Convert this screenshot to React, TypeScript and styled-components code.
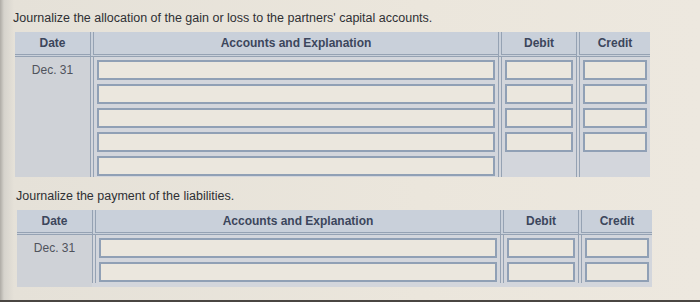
import React from 'react'
import styled, { createGlobalStyle } from 'styled-components'

const GlobalStyle = createGlobalStyle`
    body {
        margin: 0;
        background: #e9e5dc;
        font-family: "Liberation Sans", Arial, sans-serif;
    }
`

const Screen = styled.div`
    width: 700px;
    height: 302px;
    box-sizing: border-box;
    padding: 11px 0 0 13px;
    background: linear-gradient(90deg, #aeaba5 0, #d6d3cc 4px, #e5e1d8 14px, #ebe6dc 60%, #ede8df 100%);
    border-bottom: 2px solid #4a4642;
    overflow: hidden;
`

const Title = styled.p<{ $indent?: number; $top?: number }>`
    margin: ${p => p.$top ?? 0}px 0 0 ${p => p.$indent ?? 0}px;
    font-size: 12.5px;
    line-height: 15px;
    color: #2f3034;
`

const Table = styled.div<{ $indent: number; $top: number; $bottom: number }>`
    display: grid;
    grid-template-columns: 75px 408px 78px 74px;
    width: 635px;
    margin: ${p => p.$top}px 0 0 ${p => p.$indent}px;
    padding-bottom: ${p => p.$bottom}px;
    background: linear-gradient(90deg, #cfd2d7 75px, #d3d6dc 75px);
`

const HeadCell = styled.div<{ $first?: boolean }>`
    height: 25px;
    box-sizing: border-box;
    background: #c9d0da;
    border-bottom: 3px double #95a2b3;
    border-left: ${p => (p.$first ? 'none' : '4px double #95a2b3')};
    font-size: 12px;
    font-weight: bold;
    line-height: 22px;
    text-align: center;
    color: #3c465c;
`

const Cell = styled.div<{ $first?: boolean }>`
    height: 24px;
    box-sizing: border-box;
    padding: 3px 3px 1px;
    border-left: ${p => (p.$first ? 'none' : '4px double #95a2b3')};
`

const DateText = styled.div`
    font-size: 12px;
    line-height: 20px;
    text-align: center;
    color: #4f535c;
`

const Field = styled.input`
    display: block;
    width: 100%;
    height: 20px;
    box-sizing: border-box;
    margin: 0;
    padding: 0 4px;
    background: #ebe7de;
    border: 2px solid #90a0b5;
    border-radius: 0;
    outline: none;
`

type JournalProps = {
    rows: number
    amountRows: number
    indent: number
    top: number
    bottom: number
}

const Journal = ({ rows, amountRows, indent, top, bottom }: JournalProps) => (
    <Table $indent={indent} $top={top} $bottom={bottom}>
        <HeadCell $first>Date</HeadCell>
        <HeadCell>Accounts and Explanation</HeadCell>
        <HeadCell>Debit</HeadCell>
        <HeadCell>Credit</HeadCell>
        {Array.from({ length: rows }).map((_, i) => (
            <React.Fragment key={i}>
                <Cell $first>{i === 0 && <DateText>Dec. 31</DateText>}</Cell>
                <Cell><Field readOnly /></Cell>
                <Cell>{i < amountRows && <Field readOnly />}</Cell>
                <Cell>{i < amountRows && <Field readOnly />}</Cell>
            </React.Fragment>
        ))}
    </Table>
)

export default function App() {
    return (
        <Screen>
            <GlobalStyle />
            <Title>Journalize the allocation of the gain or loss to the partners' capital accounts.</Title>
            <Journal rows={5} amountRows={4} indent={2} top={6} bottom={0} />
            <Title $indent={3} $top={12}>Journalize the payment of the liabilities.</Title>
            <Journal rows={2} amountRows={2} indent={4} top={6} bottom={4} />
        </Screen>
    )
}
